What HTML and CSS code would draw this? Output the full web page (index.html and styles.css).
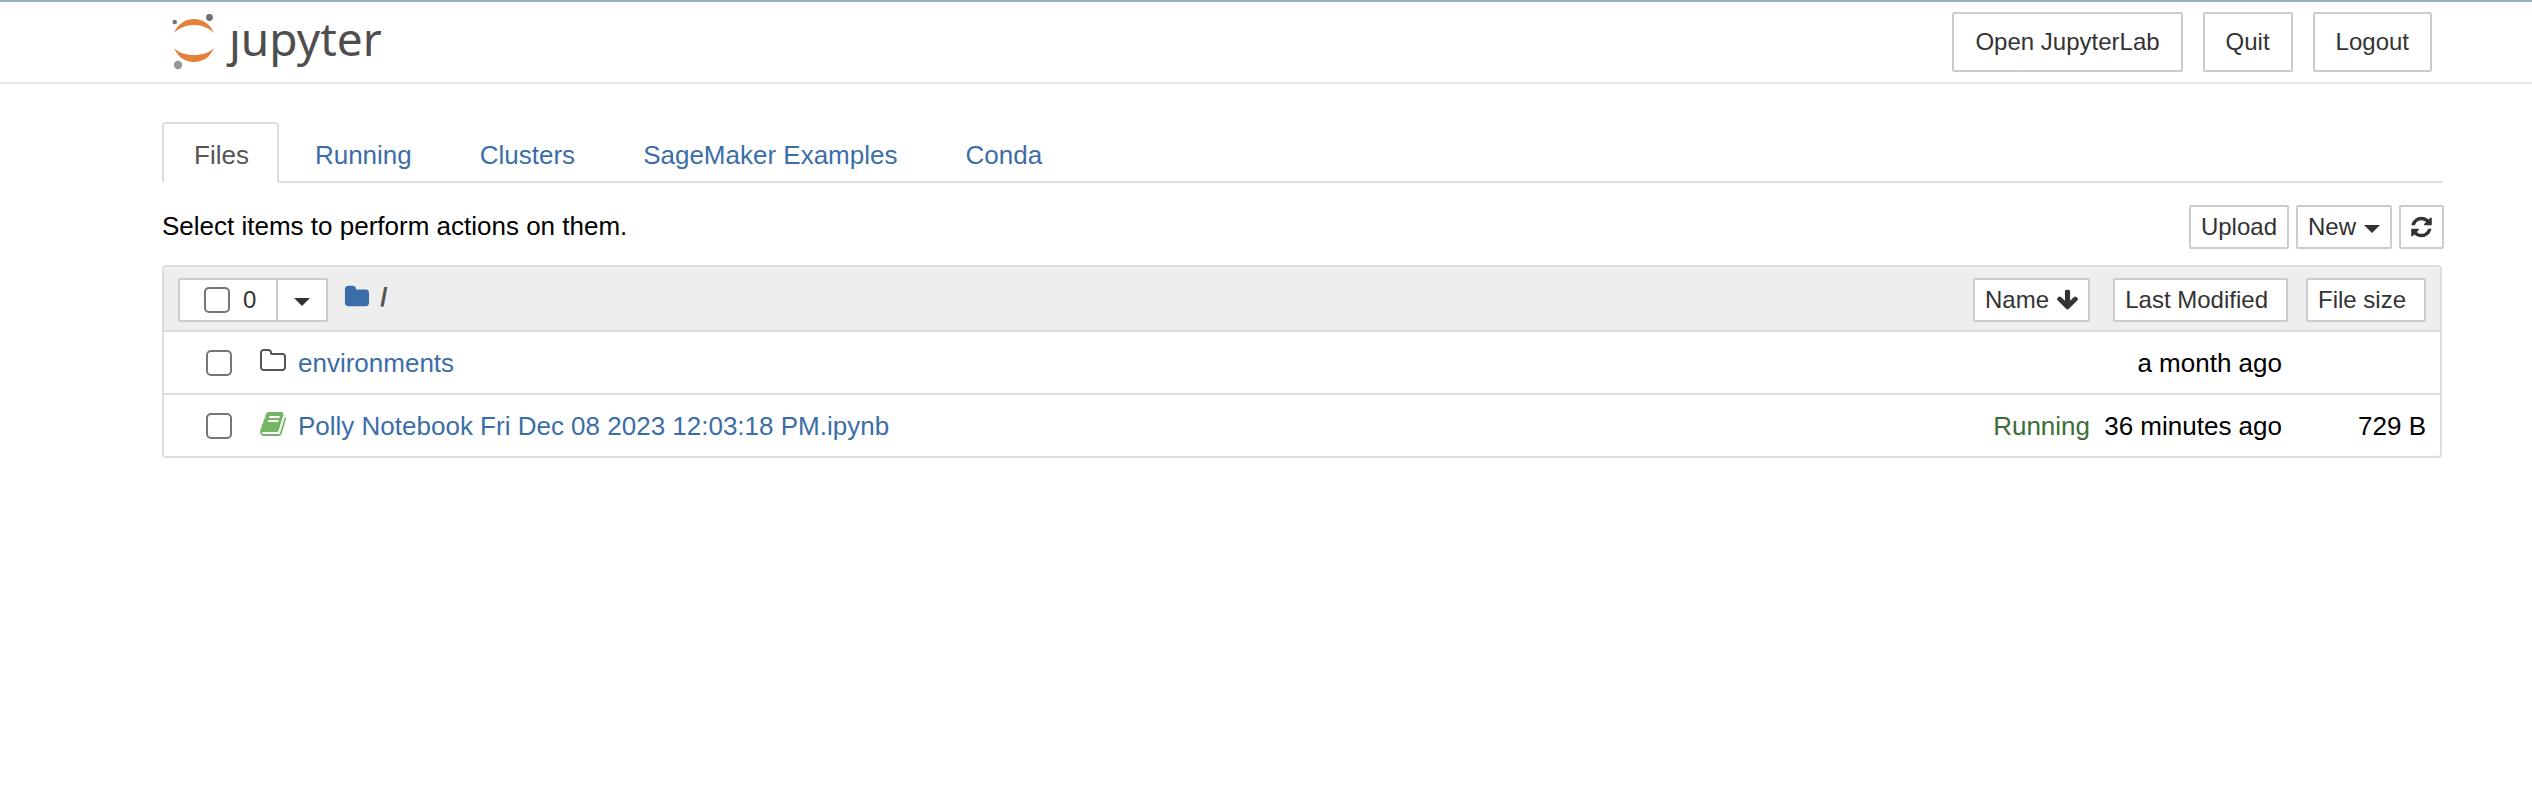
FILE: index.html
```
<!DOCTYPE html>
<html lang="en">
<head>
<meta charset="utf-8">
<title>Home Page - Jupyter Notebook</title>
<link rel="stylesheet" href="styles.css">
</head>
<body>
<svg class="sprite" aria-hidden="true">
  <symbol id="folder" viewBox="0 0 1792 1792"><path d="M1728 608v704q0 92-66 158t-158 66h-1216q-92 0-158-66t-66-158v-960q0-92 66-158t158-66h320q92 0 158 66t66 158v32h672q92 0 158 66t66 158z"/></symbol>
  <symbol id="folder-open" viewBox="0 0 1792 1792"><path d="M1600 1312v-704q0-40-28-68t-68-28h-704q-40 0-68-28t-28-68v-64q0-40-28-68t-68-28h-320q-40 0-68 28t-28 68v960q0 40 28 68t68 28h1216q40 0 68-28t28-68zm128-704v704q0 92-66 158t-158 66h-1216q-92 0-158-66t-66-158v-960q0-92 66-158t158-66h320q92 0 158 66t66 158v32h672q92 0 158 66t66 158z"/></symbol>
  <symbol id="book" viewBox="0 0 1792 1792"><path d="M1703 478q40 57 18 129l-275 906q-19 64-76.5 107.500t-122.500 43.500h-923q-77 0-148.500-53.500t-99.500-131.500q-24-67-2-127 0-4 3-27t4-37q1-8-3-21.500t-3-19.500q2-11 8-21t16.500-23.500 16.500-23.500q23-38 45-91.500t30-91.500q3-10 .5-30t-.5-28q3-11 17-28t17-23q21-36 42-92t25-90q1-9-2.500-32t.5-28q4-13 22-30.500t22-22.500q19-26 42.500-84.500t27.500-96.500q1-8-3-25.500t-2-26.500q2-8 9-18t18-23 17-21q8-12 16.500-30.500t15-35 16-36 19.500-32 26.500-23.500 36-11.500 47.500 5.500l-1 3q38-9 51-9h761q74 0 114 56t18 130l-274 906q-36 119-71.500 153.500t-128.500 34.500h-869q-27 0-38 15-11 16-1 43 24 70 144 70h923q29 0 56-15.500t35-41.500l300-987q7-22 5-57 38 15 59 43zm-1064 2q-4 13 2 22.500t20 9.500h608q13 0 25.500-9.500t16.500-22.500l21-64q4-13-2-22.500t-20-9.500h-608q-13 0-25.500 9.500t-16.500 22.500zm-83 256q-4 13 2 22.500t20 9.500h608q13 0 25.500-9.500t16.500-22.500l21-64q4-13-2-22.500t-20-9.500h-608q-13 0-25.500 9.500t-16.500 22.500z"/></symbol>
  <symbol id="refresh" viewBox="128 0 1536 1792"><path d="M1639 1056q0 5-1 7-64 268-268 434.500t-478 166.500q-146 0-282.500-55t-243.500-157l-129 129q-19 19-45 19t-45-19-19-45v-448q0-26 19-45t45-19h448q26 0 45 19t19 45-19 45l-137 137q71 66 161 102t187 36q134 0 250-65t186-179q11-17 53-117 8-23 30-23h192q13 0 22.500 9.500t9.500 22.500zm25-800v448q0 26-19 45t-45 19h-448q-26 0-45-19t-19-45 19-45l138-138q-148-137-349-137-134 0-250 65t-186 179q-11 17-53 117-8 23-30 23h-199q-13 0-22.500-9.500t-9.500-22.500v-7q65-268 270-434.500t480-166.500q146 0 284 55.500t245 156.500l130-129q19-19 45-19t45 19 19 45z"/></symbol>
  <symbol id="arrow-down" viewBox="112 0 1568 1792"><path d="M1675 832q0 53-37 90l-651 652q-39 37-91 37-53 0-90-37l-651-652q-38-36-38-90 0-53 38-91l74-75q39-37 91-37 53 0 90 37l294 294v-704q0-52 38-90t90-38h128q52 0 90 38t38 90v704l294-294q37-37 90-37 52 0 91 37l75 75q37 39 37 91z"/></symbol>
</svg>
<header class="site-header">
  <a class="logo" href="#" aria-label="Jupyter">
    <svg class="logo-mark" viewBox="0 0 44 60" aria-hidden="true">
      <path fill="#e57f3c" d="M2 21C6 12 13 7 22 7s16 5 20 14C37 16 30 13 22 13S7 16 2 21z"/>
      <path fill="#e57f3c" d="M2 36c4 9 11 14 20 14s16-5 20-14c-5 5-12 7-20 7S7 41 2 36z"/>
      <circle cx="2.700" cy="10" r="2.300" fill="#757575"/>
      <circle cx="37.500" cy="5.500" r="3.400" fill="#6f6f6f"/>
      <circle cx="6" cy="53" r="4.200" fill="#979797"/>
    </svg>
    <span class="logo-text">ȷupyter</span>
  </a>
  <div class="header-actions">
    <button class="btn btn-large" type="button">Open JupyterLab</button>
    <button class="btn btn-large" type="button">Quit</button>
    <button class="btn btn-large" type="button">Logout</button>
  </div>
</header>
<main class="content">
  <nav class="tabs">
    <a class="tab tab-active" href="#">Files</a>
    <a class="tab" href="#">Running</a>
    <a class="tab" href="#">Clusters</a>
    <a class="tab" href="#">SageMaker Examples</a>
    <a class="tab" href="#">Conda</a>
  </nav>
  <div class="toolbar">
    <p class="hint">Select items to perform actions on them.</p>
    <div class="toolbar-actions">
      <button class="btn" type="button">Upload</button>
      <button class="btn" type="button">New <span class="caret"></span></button>
      <button class="btn" type="button" aria-label="Refresh"><svg class="icon-small"><use href="#refresh"/></svg></button>
    </div>
  </div>
  <div class="file-list">
    <table class="files">
      <colgroup><col><col class="col-status"><col class="col-modified"><col class="col-size"></colgroup>
      <thead>
        <tr>
          <th>
            <div class="list-head">
              <div class="select-group">
                <label class="select-all"><input class="check" type="checkbox">0</label>
                <button class="select-menu" type="button" aria-label="Selection menu"><span class="caret"></span></button>
              </div>
              <a class="crumb" href="#" aria-label="Home"><svg class="icon-crumb"><use href="#folder"/></svg></a>
              <span class="slash">/</span>
            </div>
          </th>
          <th><button class="btn" type="button">Name <svg class="icon-small"><use href="#arrow-down"/></svg></button></th>
          <th><button class="btn btn-sort" type="button">Last Modified</button></th>
          <th class="cell-size"><button class="btn btn-sort" type="button">File size</button></th>
        </tr>
      </thead>
      <tbody>
        <tr>
          <td>
            <div class="item">
              <input class="check" type="checkbox" aria-label="Select environments">
              <svg class="icon icon-folder"><use href="#folder-open"/></svg>
              <a href="#">environments</a>
            </div>
          </td>
          <td></td>
          <td class="cell-modified">a month ago</td>
          <td class="cell-size"></td>
        </tr>
        <tr>
          <td>
            <div class="item">
              <input class="check" type="checkbox" aria-label="Select Polly Notebook">
              <svg class="icon icon-book"><use href="#book"/></svg>
              <a href="#">Polly Notebook Fri Dec 08 2023 12:03:18 PM.ipynb</a>
            </div>
          </td>
          <td class="cell-running">Running</td>
          <td class="cell-modified">36 minutes ago</td>
          <td class="cell-size">729 B</td>
        </tr>
      </tbody>
    </table>
  </div>
</main>
</body>
</html>
```
FILE: styles.css
```
* {
  box-sizing: border-box;
}

body {
  margin: 0;
  border-top: 2px solid #9ab0b5;
  background: #fff;
  color: #000;
  font: 26px/36px "Helvetica Neue", "Liberation Sans", Arial, sans-serif;
}

a {
  color: #3b6ea8;
  text-decoration: none;
}

.sprite {
  position: absolute;
  width: 0;
  height: 0;
}

.site-header {
  display: flex;
  justify-content: space-between;
  align-items: center;
  padding: 10px 100px 10px 172px;
  border-bottom: 2px solid #e7e7e7;
}

.logo {
  display: flex;
  align-items: center;
  gap: 13px;
  height: 60px;
  color: #4e4e4e;
}

.logo-mark {
  width: 44px;
  height: 60px;
}

.logo-text {
  padding-bottom: 8px;
  font: 46px/52px "Noto Sans", "Open Sans", sans-serif;
}

.header-actions {
  display: flex;
  gap: 20px;
}

.btn {
  display: inline-flex;
  align-items: center;
  gap: 8px;
  height: 44px;
  padding: 0 10px;
  border: 2px solid #ccc;
  border-radius: 2px;
  background: #fff;
  color: #333;
  font-family: inherit;
  font-size: 24px;
  line-height: 36px;
  white-space: nowrap;
}

.btn-large {
  height: 60px;
  padding: 0 21px;
}

.btn-sort {
  padding-right: 18px;
}

.caret {
  width: 0;
  border: 8px solid transparent;
  border-top-color: #333;
  border-bottom: 0;
}

.btn .caret {
  margin-top: 4px;
}

.content {
  padding: 38px 90px 0 162px;
}

.tabs {
  display: flex;
  gap: 4px;
  border-bottom: 2px solid #ddd;
}

.tab {
  margin-bottom: -2px;
  padding: 13px 30px 8px;
  border: 2px solid transparent;
  border-radius: 4px 4px 0 0;
}

.tab-active {
  padding-right: 28px;
  border-color: #ddd #ddd #fff;
  background: #fff;
  color: #555;
}

.toolbar {
  display: flex;
  justify-content: space-between;
  padding: 22px 0 16px;
  margin-right: -2px;
}

.toolbar-actions {
  display: flex;
  gap: 7px;
}

.hint {
  margin: 0;
  line-height: 42px;
}

.file-list {
  overflow: hidden;
  border: 2px solid #ddd;
  border-radius: 4px;
}

.files {
  width: 100%;
  table-layout: fixed;
  border-collapse: separate;
  border-spacing: 0;
}

.files th,
.files td {
  height: 61px;
  padding: 0;
  font-weight: normal;
  text-align: right;
  white-space: nowrap;
}

.files th {
  height: 65px;
  padding-top: 3px;
  background: #eee;
  border-bottom: 2px solid #ddd;
  vertical-align: middle;
}

.files th .btn {
  vertical-align: middle;
}

.files tbody tr + tr td {
  height: 63px;
  border-top: 2px solid #ddd;
}

.col-status {
  width: 200px;
}

.col-modified {
  width: 198px;
}

.col-size {
  width: 152px;
}

.files .cell-modified {
  padding-right: 6px;
}

.files .cell-size {
  padding-right: 14px;
}

.cell-running {
  color: #3c6e36;
}

.list-head {
  display: flex;
  align-items: center;
  padding-left: 14px;
}

.select-group {
  display: flex;
  height: 44px;
  border: 2px solid #ccc;
  border-radius: 2px;
  background: #fff;
  color: #333;
  font-size: 24px;
}

.select-all {
  display: flex;
  align-items: center;
  gap: 13px;
  padding: 0 20px 0 24px;
}

.select-menu {
  display: flex;
  align-items: center;
  justify-content: center;
  width: 50px;
  padding: 4px 0 0;
  border: 0;
  border-left: 2px solid #ccc;
  background: #fff;
}

.check {
  appearance: none;
  width: 26px;
  height: 26px;
  margin: 0;
  border: 2px solid #767676;
  border-radius: 5px;
  background: #fff;
}

.icon,
.icon-small,
.icon-crumb {
  flex: none;
  width: 28px;
  height: 28px;
  fill: currentColor;
}

.icon-small {
  width: 21px;
  height: 24px;
}

.icon-crumb {
  display: block;
  width: 26px;
  height: 26px;
}

.crumb {
  margin: 0 10px 6px 16px;
}

.slash {
  padding-bottom: 6px;
  color: #555;
  font-weight: bold;
}

.item {
  display: flex;
  align-items: center;
  padding-left: 42px;
}

.item a {
  margin-left: 11px;
}

.icon {
  margin: 0 0 4px 27px;
}

.icon-folder {
  color: #555;
}

.icon-book {
  color: #74b566;
}
```
